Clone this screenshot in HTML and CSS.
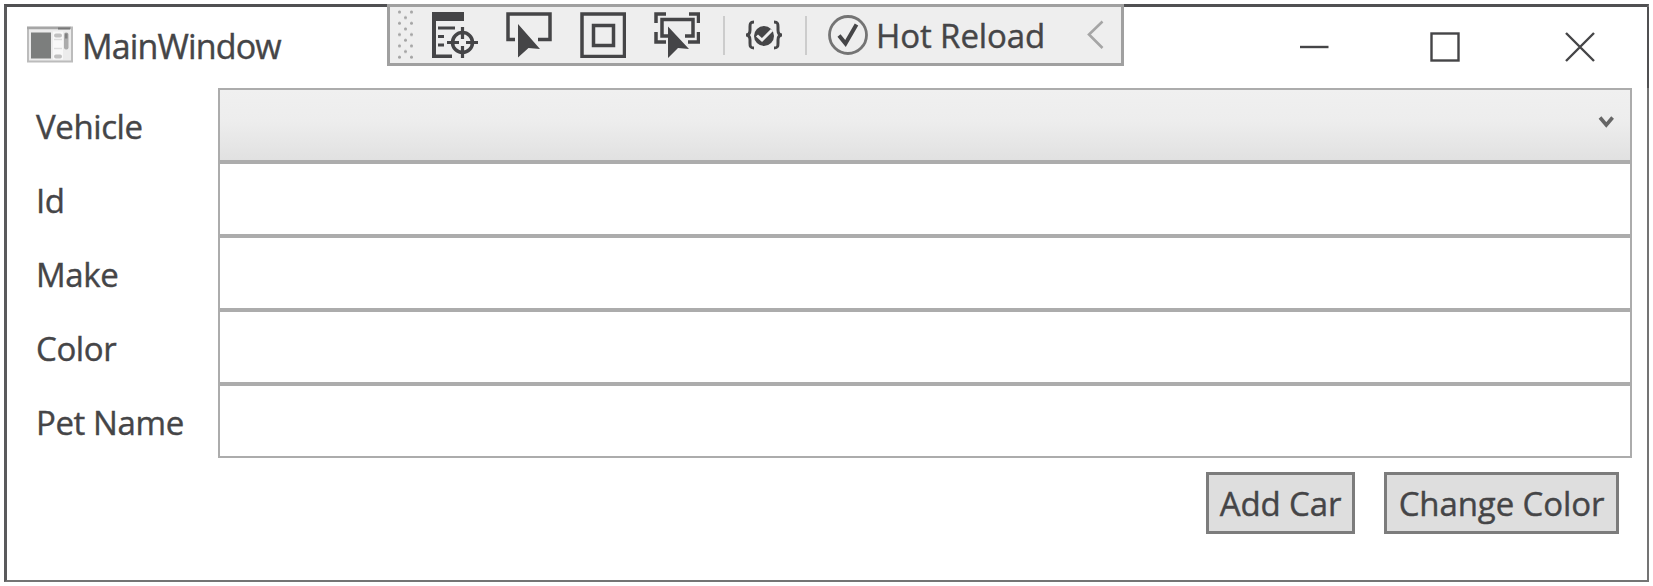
FILE: index.html
```html
<!DOCTYPE html>
<html lang="en">
<head>
<meta charset="utf-8">
<title>MainWindow</title>
<link rel="stylesheet" href="styles.css">
</head>
<body>
<main class="window">
  <header class="titlebar">
    <svg class="app-icon" width="46" height="37" viewBox="0 0 46 36">
      <rect x="1" y="1" width="44" height="34" fill="#ececec" stroke="#bcbcbc" stroke-width="2"/>
      <path d="M0 1.5H44" stroke="#a6a6a6" stroke-width="2.5"/><path d="M31 2H43" stroke="#777" stroke-width="2"/>
      <rect x="4" y="6" width="20" height="26" fill="#7c7e7d"/>
      <rect x="26" y="5" width="10" height="28" fill="#f8f8f8"/>
      <rect x="27" y="7" width="8" height="4" rx="2" fill="#c0c0c0"/><path d="M27 13H35M27 22H35" stroke="#ddd" stroke-width="1.5"/>
      <rect x="27" y="28" width="8" height="4" rx="2" fill="#c0c0c0"/>
      <rect x="37" y="6" width="4.5" height="17" rx="2" fill="#ababab"/><rect x="38" y="7" width="2.5" height="5" fill="#808080"/>
    </svg>
    <h1 class="title">MainWindow</h1>
    <nav class="caption">
      <svg width="30" height="30" viewBox="0 0 30 30"><path d="M1 15H29.500"/></svg>
      <svg width="30" height="30" viewBox="0 0 30 30"><rect x="1.500" y="1.500" width="27" height="27"/></svg>
      <svg width="30" height="30" viewBox="0 0 30 30"><path d="M1 1L29 29M29 1L1 29"/></svg>
    </nav>
  </header>

  <section class="form">
    <span class="label">Vehicle</span>
    <div class="field combo"><svg width="17" height="14" viewBox="0 0 17 14"><path d="M2 2.500L8.300 10L14.600 2.500" fill="none" stroke="#666" stroke-width="3.600"/></svg></div>
    <span class="label">Id</span><div class="field"></div>
    <span class="label">Make</span><div class="field"></div>
    <span class="label">Color</span><div class="field"></div>
    <span class="label">Pet Name</span><div class="field"></div>
  </section>

  <footer class="actions">
    <button class="button add">Add Car</button>
    <button class="button change">Change Color</button>
  </footer>

  <aside class="toolbar">
    <svg class="grip" width="18" height="52" viewBox="0 0 18 52">
      <defs><pattern id="dots" width="12" height="11.300" patternUnits="userSpaceOnUse"><circle cx="2.500" cy="3" r="1.500"/><circle cx="8.500" cy="8.650" r="1.500"/></pattern></defs>
      <rect width="18" height="50" fill="url(#dots)"/>
    </svg>
    <svg class="tool" width="46" height="46" viewBox="0 0 46 46">
      <path d="M0 0H32V9H4V42.500H20V46H0Z" fill="#454547"/>
      <path d="M6 16H23M6 24.500H12M6 33H12" stroke-width="3"/>
      <circle cx="30.500" cy="30.500" r="10" stroke-width="3.500"/>
      <path d="M30.500 15V27M30.500 34V46M15 30.500H27M34 30.500H46" stroke-width="3.200"/>
    </svg>
    <svg class="tool" width="46" height="46" viewBox="0 0 46 46">
      <path d="M9 27.500H2V2H44V27.500H32" stroke-width="3.500"/>
      <path d="M12 12L34 37L22.500 36L12 45.500Z" fill="#454547"/>
    </svg>
    <svg class="tool" width="46" height="46" viewBox="0 0 46 46">
      <rect x="2" y="2" width="42.500" height="42.500" stroke-width="3.500"/>
      <rect x="13.500" y="13.500" width="20" height="20" stroke-width="3.500"/>
    </svg>
    <svg class="tool" width="46" height="46" viewBox="0 0 46 46">
      <path d="M2 11V2H12M35 2H44.500V11M44.500 20V30H34M12 30H2V20" stroke-width="3.500"/>
      <path d="M14 24H8V7.500H39V24H31" stroke-width="3.500"/>
      <path d="M14 14.500L35 37L24 36L14 46Z" fill="#454547"/>
    </svg>
    <i class="separator"></i>
    <svg class="braces" width="38" height="30" viewBox="0 0 38 30">
      <path d="M9 2C5 2 5 4 5 7V10C5 13 4 15 1 15C4 15 5 17 5 20V23C5 26 5 28 9 28M29 2C33 2 33 4 33 7V10C33 13 34 15 37 15C34 15 33 17 33 20V23C33 26 33 28 29 28" fill="none" stroke="#454547" stroke-width="3"/>
      <circle cx="19" cy="16" r="10" fill="#454547"/>
      <path d="M12 15.500L17 20L27 10" fill="none" stroke="#eee" stroke-width="3"/>
    </svg>
    <i class="separator"></i>
    <svg class="status" width="40" height="42" viewBox="0 0 40 42">
      <circle cx="20" cy="21" r="18.500" fill="none" stroke="#747474" stroke-width="2.800"/>
      <path d="M11 21.500L17.500 29.500L28.500 10.500" fill="none" stroke="#454547" stroke-width="4"/>
    </svg>
    <span class="reload">Hot Reload</span>
    <svg width="17" height="30" viewBox="0 0 17 30"><path d="M15.500 1.500L2 14.500L15.500 28" fill="none" stroke="#a5a5a5" stroke-width="2.600"/></svg>
  </aside>
</main>
</body>
</html>
```
FILE: styles.css
```css
* { box-sizing: border-box; }
body { margin: 0; background: #fff; color: #454547; font-family: "Open Sans", "Noto Sans", sans-serif; font-size: 33px; letter-spacing: -0.4px; -webkit-text-stroke: 0.4px #454547; overflow: hidden; }
.window { position: relative; width: 1645px; height: 578px; margin: 4px 0 0 4px; border: solid #747474; border-width: 3px 2px 2px 3px; border-top-color: #505052; border-left-color: #5a5a5c; }
.titlebar { height: 81px; display: flex; align-items: flex-start; padding: 19px 52px 0 20px; border-right: 2px solid #505052; margin-right: -2px; }
.app-icon { flex: none; }
.title { margin: -4px 0 0 9px; font-size: 34px; line-height: 48px; font-weight: 400; letter-spacing: -0.85px; }
.caption { margin-left: auto; padding-top: 6px; display: flex; }
.caption svg { fill: none; stroke: #454547; stroke-width: 2.4px; margin-left: 101px; }
.caption svg:nth-child(3) { margin-left: 105px; }
.form { display: grid; grid-template-columns: 191px 1414px; grid-template-rows: repeat(5, 74px); margin-left: 20px; }
.label { padding-left: 9px; line-height: 78px; height: 74px; white-space: nowrap; }
.field { border: 2px solid #acacac; border-width: 2.5px 2px 2px 2px; background: #fff; }
.combo { background: linear-gradient(#f0f0f0, #ededed 45%, #e1e1e1); display: flex; justify-content: flex-end; padding: 25px 15px 0 0; }
.actions { display: flex; justify-content: flex-end; gap: 29px; padding: 14px 28px 0 0; }
.button { height: 62px; padding: 0; border: 3px solid #7c7c7c; background: #dedede; color: #454547; font: inherit; letter-spacing: -0.1px; line-height: 58px; white-space: nowrap; }
.add { width: 149px; }
.change { width: 235px; }
.toolbar { position: absolute; left: 380px; top: -3px; width: 737px; height: 62px; display: flex; align-items: center; border: 3px solid #a0a0a0; background: #eee; }
.toolbar svg { flex: none; }
.grip { margin: 0 17px 0 7px; fill: #a5a5a5; }
.tool { margin-right: 28px; fill: none; stroke: #454547; stroke-width: 0; }
.separator { width: 2px; height: 39px; background: #ccc; margin-left: -5px; }
.braces { margin: 0 22px 0 20px; }
.braces + .separator { margin-left: 0; }
.status { margin-left: 21px; }
.reload { margin-left: 8px; width: 170px; white-space: nowrap; margin-right: 41px; line-height: 50px; padding-top: 2px; letter-spacing: -0.1px; }
```
